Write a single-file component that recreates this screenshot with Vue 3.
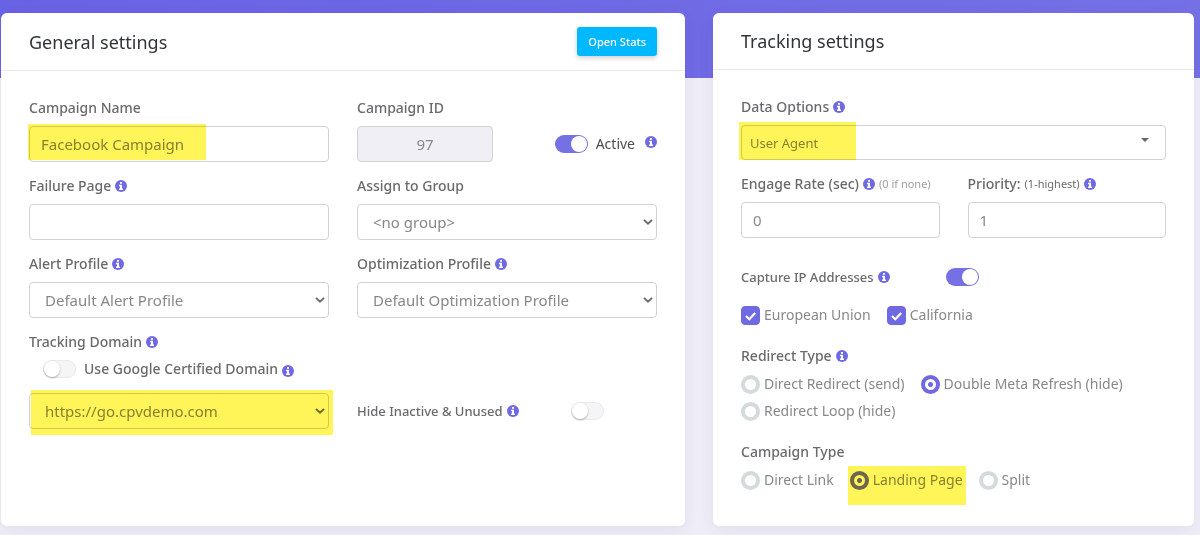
<script setup>
import { ref, h } from 'vue'

const campaignName = ref('Facebook Campaign')
const failurePage = ref('')
const active = ref(true)
const googleDomain = ref(false)
const hideInactive = ref(false)
const captureIp = ref(true)
const engageRate = ref('0')
const priority = ref('1')
const regions = ref(['European Union', 'California'])
const redirectType = ref('Double Meta Refresh (hide)')
const campaignType = ref('Landing Page')

const regionOptions = ['European Union', 'California']
const redirectOptions = ['Direct Redirect (send)', 'Double Meta Refresh (hide)', 'Redirect Loop (hide)']
const campaignOptions = ['Direct Link', 'Landing Page', 'Split']

const InfoIcon = () =>
  h('svg', { viewBox: '0 0 12 12', width: 12, height: 12, role: 'img', 'aria-label': 'Info' }, [
    h('circle', { cx: 6, cy: 6, r: 6, fill: '#7069e4' }),
    h('path', { d: 'M5 2h2v1.8H5zM4 4.8h3v3.7h1V10H4V8.5h1V6.2H4z', fill: '#fff' })
  ])

const Chevron = () =>
  h('svg', { viewBox: '0 0 10 6', width: 10, height: 6, 'aria-hidden': 'true' }, [
    h('path', { d: 'M1 .9l4 3.8L9 .9', fill: 'none', stroke: '#6b6b6b', 'stroke-width': 1.9 })
  ])
</script>

<template>
  <div class="page">
    <main class="cards">
      <section class="card general">
        <header class="card-head">
          <h2>General settings</h2>
          <button type="button" class="stats">Open Stats</button>
        </header>
        <div class="general-body">
          <div class="field">
            <label class="label" for="name">Campaign Name</label>
            <div class="control">
              <input id="name" v-model="campaignName" class="box" type="text" />
              <span class="mark mark-name"></span>
            </div>
          </div>
          <div class="id-row">
            <div class="field id-field">
              <label class="label" for="cid">Campaign ID</label>
              <input id="cid" class="box id-box" type="text" value="97" disabled />
            </div>
            <div class="active">
              <input id="active" v-model="active" class="switch" type="checkbox" />
              <label for="active">Active</label>
              <InfoIcon class="active-info" />
            </div>
          </div>

          <div class="field">
            <label class="label" for="failure">Failure Page <InfoIcon /></label>
            <input id="failure" v-model="failurePage" class="box" type="text" />
          </div>
          <div class="field">
            <label class="label" for="group">Assign to Group</label>
            <div class="control">
              <select id="group" class="box"><option>&lt;no group&gt;</option></select>
              <Chevron class="arrow" />
            </div>
          </div>

          <div class="field">
            <label class="label" for="alert">Alert Profile <InfoIcon /></label>
            <div class="control">
              <select id="alert" class="box"><option>Default Alert Profile</option></select>
              <Chevron class="arrow" />
            </div>
          </div>
          <div class="field">
            <label class="label" for="optim">Optimization Profile <InfoIcon /></label>
            <div class="control">
              <select id="optim" class="box"><option>Default Optimization Profile</option></select>
              <Chevron class="arrow" />
            </div>
          </div>

          <div class="field">
            <label class="label" for="domain">Tracking Domain <InfoIcon /></label>
            <div class="google">
              <input id="google" v-model="googleDomain" class="switch" type="checkbox" />
              <label class="label" for="google">Use Google Certified Domain</label>
              <InfoIcon class="google-info" />
            </div>
            <div class="control">
              <select id="domain" class="box"><option>https://go.cpvdemo.com</option></select>
              <Chevron class="arrow" />
              <span class="mark mark-domain"></span>
            </div>
          </div>
          <div class="hide-row">
            <label class="label tight" for="hide">Hide Inactive &amp; Unused <InfoIcon /></label>
            <input id="hide" v-model="hideInactive" class="switch" type="checkbox" />
          </div>
        </div>
      </section>

      <section class="card tracking">
        <header class="card-head">
          <h2>Tracking settings</h2>
        </header>
        <div class="tracking-body">
          <div class="field">
            <label class="label" for="data">Data Options <InfoIcon /></label>
            <div class="control">
              <select id="data" class="box data"><option>User Agent</option></select>
              <svg class="caret" viewBox="0 0 8 4" width="8" height="4" aria-hidden="true"><path d="M0 0h8L4 4z" fill="#666" /></svg>
              <span class="mark mark-data"></span>
            </div>
          </div>
          <div class="pair">
            <div class="field">
              <label class="label" for="engage">Engage Rate (sec) <InfoIcon /> <small class="muted">(0 if none)</small></label>
              <input id="engage" v-model="engageRate" class="box" type="text" />
            </div>
            <div class="field">
              <label class="label" for="priority">Priority: <small>(1-highest)</small> <InfoIcon /></label>
              <input id="priority" v-model="priority" class="box" type="text" />
            </div>
          </div>
          <div class="capture">
            <label class="label tight" for="capture">Capture IP Addresses <InfoIcon /></label>
            <input id="capture" v-model="captureIp" class="switch" type="checkbox" />
          </div>
          <div class="choices regions">
            <label v-for="r in regionOptions" :key="r" class="choice">
              <span class="tick">
                <input v-model="regions" type="checkbox" :value="r" />
                <svg viewBox="0 0 19 19" width="19" height="19" aria-hidden="true"><path d="M5 10l3.3 3.2L14.2 7" fill="none" stroke="#fff" stroke-width="2.2" /></svg>
              </span>
              {{ r }}
            </label>
          </div>
          <fieldset class="redirect">
            <legend class="label">Redirect Type <InfoIcon /></legend>
            <div class="choices">
              <label v-for="o in redirectOptions" :key="o" class="choice">
                <input v-model="redirectType" type="radio" name="redirect" :value="o" />{{ o }}
              </label>
            </div>
          </fieldset>
          <fieldset class="type">
            <legend class="label">Campaign Type</legend>
            <div class="choices">
              <label v-for="o in campaignOptions" :key="o" class="choice">
                <input v-model="campaignType" type="radio" name="type" :value="o" />{{ o }}
                <span v-if="o === 'Landing Page'" class="mark mark-type"></span>
              </label>
            </div>
          </fieldset>
        </div>
      </section>
    </main>
  </div>
</template>

<style>
body {
  background: #efedf7;
}
</style>

<style scoped>
.page,
.page * {
  box-sizing: border-box;
}
.page {
  min-height: 100vh;
  padding: 13px 6px 9px 1px;
  background: linear-gradient(90deg, #6a62e4, #7570e5) 0 0 / 100% 78px no-repeat;
  font-family: "Noto Sans", "Open Sans", sans-serif;
  font-size: 14px;
  line-height: 20px;
  color: #88888a;
}
.cards {
  display: grid;
  grid-template-columns: 684fr 481fr;
  gap: 28px;
}
.card {
  background: #fff;
  border-radius: 6px;
  box-shadow: 0 5px 16px rgba(60, 50, 110, 0.07);
  padding-bottom: 36px;
}
.card-head {
  display: flex;
  align-items: center;
  justify-content: space-between;
  height: 58px;
  padding: 0 28px;
  border-bottom: 1px solid #e8eaeb;
}
.tracking .card-head {
  height: 57px;
}
h2 {
  margin: 0;
  font-size: 18px;
  line-height: 24px;
  font-weight: 400;
  color: #303338;
}
.stats {
  height: 29px;
  padding: 0 11px;
  border: 0;
  border-radius: 3px;
  background: #00b8ff;
  color: #fff;
  font: 500 11px/16px "Noto Sans", sans-serif;
  box-shadow: 0 2px 5px rgba(0, 0, 0, 0.2);
}
.general-body {
  display: grid;
  grid-template-columns: 1fr 1fr;
  gap: 14px 28px;
  padding: 27px 28px 0;
}
.tracking-body {
  padding: 27px 28px 0;
}
.field {
  min-width: 0;
}
.label {
  display: flex;
  align-items: center;
  gap: 4px;
  height: 20px;
  padding: 0;
  white-space: nowrap;
  font-weight: 500;
  color: #6a6a6c;
}
.tight {
  font-size: 13px;
}
.label svg {
  flex: none;
}
.field > .label {
  margin-bottom: 8px;
}
small {
  font-size: 11px;
  font-weight: 400;
}
.muted {
  color: #a0a0a2;
}
.control {
  position: relative;
}
.box {
  display: block;
  width: 100%;
  height: 36px;
  margin: 0;
  padding: 0 11px;
  border: 1px solid #cfd3d4;
  border-radius: 4px;
  outline: 0;
  background: #fff;
  color: #88888a;
  font: 400 15px/20px "Noto Sans", sans-serif;
  appearance: none;
}
select.box {
  padding: 0 15px;
}
select.box.data {
  height: 35px;
  padding: 0 8px;
  font-size: 13px;
}
.arrow {
  position: absolute;
  right: 4px;
  top: 15px;
  pointer-events: none;
}
.caret {
  position: absolute;
  right: 17px;
  top: 13px;
  pointer-events: none;
}
.mark {
  position: absolute;
  background: #fff458;
  mix-blend-mode: multiply;
  pointer-events: none;
}
.mark-name {
  left: -1px;
  top: -2px;
  width: 178px;
  height: 36px;
}
.mark-domain {
  left: 2px;
  right: -4px;
  top: -3px;
  height: 45px;
}
.mark-data {
  left: -2px;
  top: -3px;
  width: 117px;
  height: 38px;
}
.mark-type {
  left: -2px;
  right: -3px;
  top: -4px;
  height: 39px;
}
.id-row {
  display: flex;
  justify-content: space-between;
}
.id-field {
  width: 136px;
}
.id-box {
  background: #f0eff5;
  text-align: center;
}
.active {
  display: flex;
  align-items: center;
  align-self: flex-end;
  gap: 8px;
  height: 36px;
  color: #4c4c50;
}
.active-info {
  margin: 0 0 4px 2px;
}
.switch {
  appearance: none;
  flex: none;
  width: 33px;
  height: 18px;
  margin: 0;
  padding: 1px;
  border: 0;
  border-radius: 9px;
  background: #f5f5f7;
  box-shadow: inset 0 0 0 1px #eaeaed;
}
.switch::before {
  content: "";
  display: block;
  width: 16px;
  height: 16px;
  border-radius: 50%;
  background: #fff;
  box-shadow: 0 1px 2px rgba(0, 0, 0, 0.3);
}
.switch:checked {
  background: #7570e3;
  box-shadow: none;
}
.switch:checked::before {
  margin-left: auto;
  box-shadow: none;
}
.field > .label[for="domain"] {
  margin-bottom: 6px;
}
.google {
  display: flex;
  align-items: center;
  gap: 8px;
  height: 22px;
  margin-bottom: 13px;
  padding-left: 14px;
}
.google-info {
  margin: 4px 0 0 -4px;
}
.hide-row {
  display: flex;
  align-items: center;
  justify-content: space-between;
  align-self: end;
  height: 36px;
  padding-right: 53px;
}
.pair {
  display: grid;
  grid-template-columns: 1fr 1fr;
  gap: 28px;
  margin-top: 14px;
}
.capture {
  display: flex;
  align-items: center;
  justify-content: space-between;
  height: 20px;
  margin-top: 29px;
  padding-right: 187px;
}
.choices {
  display: flex;
  flex-wrap: wrap;
  gap: 7px 16px;
}
.regions {
  margin-top: 18px;
}
.choice {
  position: relative;
  display: flex;
  align-items: center;
  gap: 4px;
  height: 20px;
  white-space: nowrap;
}
.tick {
  display: grid;
}
.tick > * {
  grid-area: 1 / 1;
}
.tick input {
  appearance: none;
  width: 19px;
  height: 19px;
  margin: 0;
  border-radius: 4px;
  border: 1px solid #7069e4;
}
.tick input:checked {
  background: #7069e4;
}
.tick svg {
  pointer-events: none;
}
.choice input[type="radio"] {
  appearance: none;
  width: 19px;
  height: 19px;
  margin: 0;
  border: 4px solid #d5dbdd;
  border-radius: 50%;
  background: #fff;
}
.choice input[type="radio"]:checked {
  border-color: #7069e4;
  background: radial-gradient(circle, #7069e4 0 2px, #fff 3px);
}
fieldset {
  min-width: 0;
  margin: 0;
  padding: 0;
  border: 0;
}
legend {
  margin-bottom: 8px;
}
.redirect {
  margin-top: 21px;
}
.type {
  margin-top: 21px;
}
</style>
